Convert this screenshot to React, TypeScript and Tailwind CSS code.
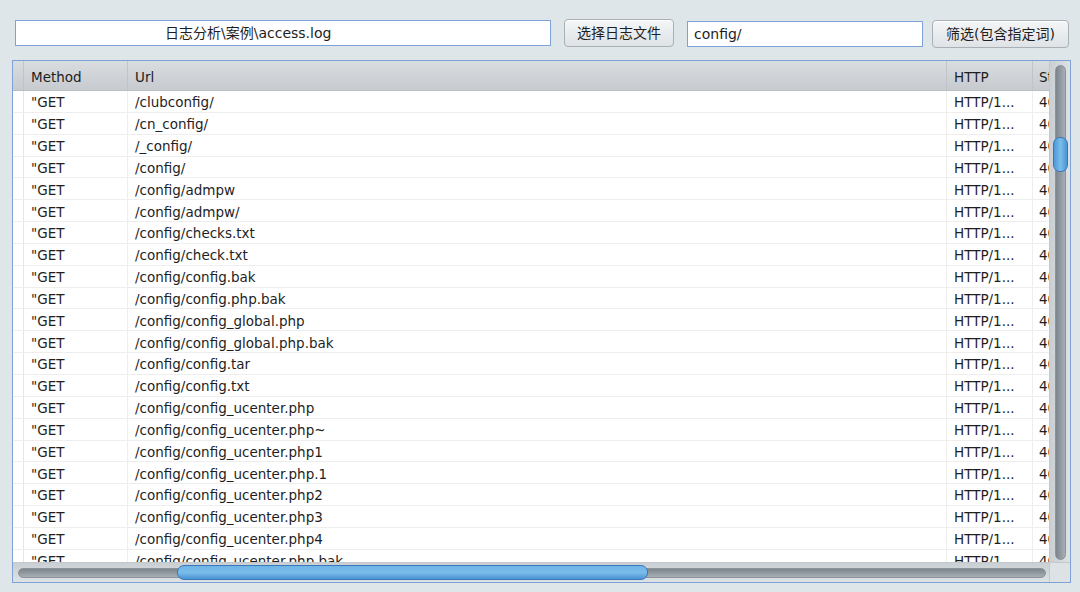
import React from 'react'

const urls = [
  '/clubconfig/',
  '/cn_config/',
  '/_config/',
  '/config/',
  '/config/admpw',
  '/config/admpw/',
  '/config/checks.txt',
  '/config/check.txt',
  '/config/config.bak',
  '/config/config.php.bak',
  '/config/config_global.php',
  '/config/config_global.php.bak',
  '/config/config.tar',
  '/config/config.txt',
  '/config/config_ucenter.php',
  '/config/config_ucenter.php~',
  '/config/config_ucenter.php1',
  '/config/config_ucenter.php.1',
  '/config/config_ucenter.php2',
  '/config/config_ucenter.php3',
  '/config/config_ucenter.php4',
  '/config/config_ucenter.php.bak',
]

const font = { fontFamily: '"DejaVu Sans", "Noto Sans CJK SC", sans-serif' }

const Button = ({ label, w }: { label: string; w: string }) => (
  <button
    className={`${w} h-[28px] rounded-[4px] border border-[#a9b0b6] bg-gradient-to-b from-[#f4f6f7] to-[#dfe3e6] text-[14px] text-[#1e1e1e] shadow-[inset_0_1px_0_#fff] flex items-center justify-center`}
  >
    {label}
  </button>
)

const App = () => {
  return (
    <div className="w-[1080px] h-[592px] bg-[#dfe6ea] overflow-hidden text-[13.5px] text-[#1e1e1e]" style={font}>
      {/* toolbar */}
      <div className="flex items-center h-[28px] mt-[19px]">
        <div className="ml-[15px] w-[536px] h-[26px] bg-white border border-[#7ea2d8] flex items-center pl-[149px] text-[14px]">
          日志分析\案例\access.log
        </div>
        <div className="ml-[13px]">
          <Button label="选择日志文件" w="w-[110px]" />
        </div>
        <div className="ml-[13px] w-[236px] h-[26px] mt-[2px] bg-white border border-[#7ea2d8] flex items-center pl-[6px] text-[14px]">
          config/
        </div>
        <div className="ml-[9px] mt-[2px]">
          <Button label="筛选(包含指定词)" w="w-[137px]" />
        </div>
      </div>

      {/* table frame */}
      <div className="ml-[12px] mt-[13px] w-[1059px] h-[523px] border border-[#7ea2d8] bg-white flex flex-col">
        <div className="flex h-[501px]">
          <div className="flex-1 overflow-hidden flex flex-col">
            {/* header */}
            <div className="flex h-[30px] shrink-0 pt-[3px] bg-gradient-to-b from-[#d9dde0] to-[#c7cbcf] border-b border-[#b9bec2]">
              <div className="w-[11px] border-r border-[#bfc4c8] -mt-[3px]" />
              <div className="w-[104px] border-r border-[#bfc4c8] -mt-[3px] pt-[3px] flex items-center pl-[7px]">Method</div>
              <div className="w-[819px] border-r border-[#bfc4c8] -mt-[3px] pt-[3px] flex items-center pl-[7px]">Url</div>
              <div className="w-[86px] border-r border-[#bfc4c8] -mt-[3px] pt-[3px] flex items-center pl-[7px]">HTTP</div>
              <div className="flex-1 flex items-center pl-[6px] overflow-hidden whitespace-nowrap">St</div>
            </div>
            {/* rows */}
            <div className="flex-1 overflow-hidden">
              {urls.map((u) => (
                <div key={u} className="flex h-[21.85px] border-b border-[#eeeeee]">
                  <div className="w-[11px] border-r border-[#e6e6e6]" />
                  <div className="w-[104px] border-r border-[#eeeeee] flex items-center pt-[2px] pl-[7px]">"GET</div>
                  <div className="w-[819px] border-r border-[#eeeeee] flex items-center pt-[2px] pl-[7px] whitespace-nowrap">{u}</div>
                  <div className="w-[86px] border-r border-[#eeeeee] flex items-center pt-[2px] pl-[7px] whitespace-nowrap">HTTP/1...</div>
                  <div className="flex-1 flex items-center pt-[2px] pl-[6px] overflow-hidden whitespace-nowrap">404</div>
                </div>
              ))}
            </div>
          </div>
          {/* vertical scrollbar */}
          <div className="w-[21px] bg-gradient-to-r from-[#c9cfd3] to-[#dde2e5] border-l border-[#c2c8cc] flex justify-center pt-[4px] pb-[2px]">
            <div className="w-[11px] h-full rounded-full bg-gradient-to-r from-[#7c858c] to-[#a7afb5] border border-[#8a9399] pt-[71px] flex justify-center">
              <div className="w-[15px] h-[35px] -mx-[3px] rounded-[7px] bg-gradient-to-r from-[#4d98d8] via-[#79bdea] to-[#4a94d4] border border-[#3b78bb]" />
            </div>
          </div>
        </div>
        {/* bottom scrollbar row */}
        <div className="flex h-[20px] border-t border-[#c2c8cc]">
          <div className="flex-1 bg-gradient-to-b from-[#c9cfd3] to-[#dde2e5] flex items-center pl-[5px] pr-[3px]">
            <div className="w-full h-[10px] rounded-full bg-gradient-to-b from-[#7c858c] to-[#a7afb5] border border-[#8a9399] flex items-center pl-[158px]">
              <div className="w-[471px] h-[15px] rounded-[7px] bg-gradient-to-b from-[#6fb4e6] via-[#79bdea] to-[#4a94d4] border border-[#3b78bb]" />
            </div>
          </div>
          <div className="w-[21px] bg-[#dde2e5] border-l border-[#c2c8cc]" />
        </div>
      </div>
    </div>
  )
}

export default App
